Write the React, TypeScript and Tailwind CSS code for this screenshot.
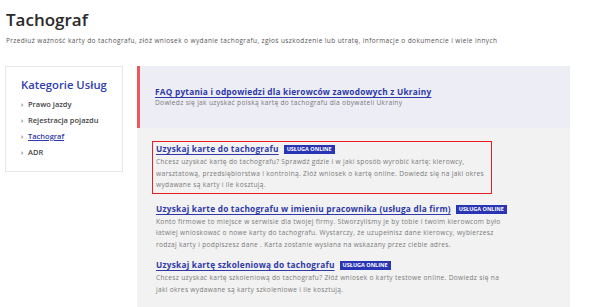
import React from "react";

const font = { fontFamily: '"Open Sans", "Noto Sans", sans-serif' };

function Badge() {
  return (
    <span className="ml-[5px] inline-block whitespace-nowrap bg-[#2a35b5] px-[3px] text-[5.5px] font-bold leading-[9px] text-white">
      USŁUGA ONLINE
    </span>
  );
}

function Item({ title, lines, boxed }: { title: string; lines: string[]; boxed?: boolean }) {
  return (
    <div
      className={
        boxed
          ? "w-[340px] border-[1.5px] border-solid border-[#ea1c24] pl-[3px] pt-[1px] pb-[2px]"
          : "w-[340px] pl-[4px] pt-[1px]"
      }
    >
      <div className="flex h-[13px] items-center whitespace-nowrap">
        <span className="text-[8.3px] font-bold tracking-[0.22px] text-[#2f3aa8] underline decoration-[0.7px] underline-offset-[1.5px]">{title}</span>
        <Badge />
      </div>
      <div className="whitespace-nowrap text-[6.6px] leading-[11.5px] tracking-[0.32px] text-[#7a7a7a]">
        {lines.map((l, i) => (
          <div key={i}>{l}</div>
        ))}
      </div>
    </div>
  );
}

export default function App() {
  return (
    <div className="h-[307px] w-[605px] overflow-hidden bg-white" style={font}>
      <div className="pl-[6px] pt-[9px]">
        <div className="text-[17px] font-semibold leading-[22px] text-[#2a2a2a]">Tachograf</div>
        <div className="mt-[5px] whitespace-nowrap text-[6.5px] leading-[10px] tracking-[0.4px] text-[#555]">
          Przedłuż ważność karty do tachografu, złóż wniosek o wydanie tachografu, zgłoś uszkodzenie lub utratę, informacje o dokumencie i wiele innych
        </div>
      </div>
      <div className="mt-[20px] flex pl-[5px]">
        <div className="h-[106px] w-[118px] border border-[#e6e6e6] pl-[15px] pt-[11px]">
          <div className="whitespace-nowrap text-[11.3px] font-semibold leading-[14px] text-[#3240b0]">Kategorie Usług</div>
          <ul className="mt-[7px] flex flex-col gap-[4.5px] text-[7.5px] font-semibold text-[#444]">
            {["Prawo jazdy", "Rejestracja pojazdu", "Tachograf", "ADR"].map((t) => (
              <li key={t} className="flex h-[11.5px] items-center">
                <span className="w-[7px] text-[6.5px] text-[#555]">›</span>
                <span className={t === "Tachograf" ? "text-[#2f3aa8] underline" : ""}>{t}</span>
              </li>
            ))}
          </ul>
        </div>
        <div className="ml-[14px] flex w-[433px] flex-col">
          <div className="flex h-[62px] flex-col justify-center border-l-[3px] border-[#f0575c] bg-[#ededf6] pl-[15px]">
            <div className="whitespace-nowrap text-[8.3px] font-bold leading-[12px] tracking-[0.22px] text-[#2f3aa8] underline decoration-[0.7px] underline-offset-[1.5px]">
              FAQ pytania i odpowiedzi dla kierowców zawodowych z Ukrainy
            </div>
            <div className="whitespace-nowrap text-[6.6px] leading-[10px] tracking-[0.32px] text-[#7a7a7a]">
              Dowiedz się jak uzyskać polską kartę do tachografu dla obywateli Ukrainy
            </div>
          </div>
          <div className="flex h-[200px] flex-col bg-[#f2f2f2] pl-[15px] pt-[13px]">
            <Item
              boxed
              title="Uzyskaj karte do tachografu"
              lines={[
                "Chcesz uzyskać kartę do tachografu? Sprawdź gdzie i w jaki sposób wyrobić kartę: kierowcy,",
                "warsztatową, przedsiębiorstwa i kontrolną. Złóż wniosek o kartę online. Dowiedz się na jaki okres",
                "wydawane są karty i ile kosztują.",
              ]}
            />
            <div className="mt-[8px]">
              <Item
                title="Uzyskaj karte do tachografu w imieniu pracownika (usługa dla firm)"
                lines={[
                  "Konto firmowe to miejsce w serwisie dla twojej firmy. Stworzyliśmy je by tobie i twoim kierowcom było",
                  "łatwiej wnioskować o nowe karty do tachografu. Wystarczy, że uzupełnisz dane kierowcy, wybierzesz",
                  "rodzaj karty i podpiszesz dane . Karta zostanie wysłana na wskazany przez ciebie adres.",
                ]}
              />
            </div>
            <div className="mt-[8px]">
              <Item
                title="Uzyskaj kartę szkoleniową do tachografu"
                lines={[
                  "Chcesz uzyskać kartę szkoleniową do tachografu? Złóż wniosek o karty testowe online. Dowiedz się na",
                  "jaki okres wydawane są karty szkoleniowe i ile kosztują.",
                ]}
              />
            </div>
          </div>
        </div>
      </div>
    </div>
  );
}
